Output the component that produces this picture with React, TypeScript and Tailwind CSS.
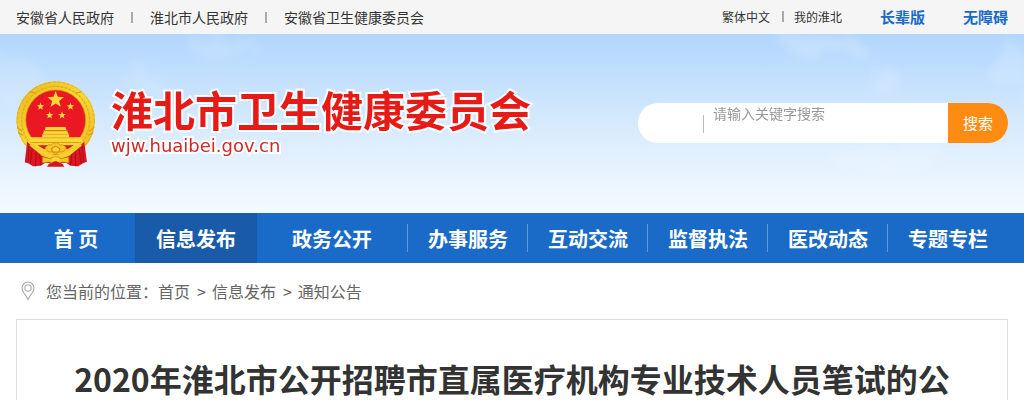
import { clsx } from "clsx";

const siteLinks = ["安徽省人民政府", "淮北市人民政府", "安徽省卫生健康委员会"];

const navItems = [
  { label: "首 页" },
  { label: "信息发布", active: true },
  { label: "政务公开" },
  { label: "办事服务", divider: true },
  { label: "互动交流", divider: true },
  { label: "监督执法", divider: true },
  { label: "医改动态", divider: true },
  { label: "专题专栏", divider: true },
];

const crumbs = ["首页", "信息发布", "通知公告"];

function starPoints(cx: number, cy: number, r: number) {
  return Array.from({ length: 10 }, (_, i) => {
    const radius = i % 2 === 0 ? r : r * 0.42;
    const angle = (Math.PI / 5) * i - Math.PI / 2;
    return `${(cx + radius * Math.cos(angle)).toFixed(1)},${(cy + radius * Math.sin(angle)).toFixed(1)}`;
  }).join(" ");
}

function Emblem() {
  return (
    <svg viewBox="20 12 238 256" className="h-[86px] w-20 shrink-0" aria-hidden="true">
      <defs>
        <linearGradient id="gold" x1="0" y1="0" x2="1" y2="1">
          <stop offset="0" stopColor="#e9b51c" />
          <stop offset="0.5" stopColor="#f9d936" />
          <stop offset="1" stopColor="#eeb41c" />
        </linearGradient>
      </defs>
      <ellipse cx="138" cy="130" rx="117" ry="117" fill="url(#gold)" />
      <ellipse cx="138" cy="130" rx="115" ry="115" fill="none" stroke="#dba01a" strokeWidth="2" strokeDasharray="10 4" />
      <ellipse cx="138" cy="130" rx="101" ry="102" fill="none" stroke="#e3ae1c" strokeWidth="4" strokeDasharray="9 3" />
      <circle cx="138" cy="128" r="89" fill="#ea1822" stroke="#d18a14" strokeWidth="2" />
      <path d="M24 150l14 12M26 166l16 8M252 150l-14 12M250 166l-16 8M60 44l18 4M216 44l-18 4" stroke="#d39a16" strokeWidth="3" />
      {/* drapery */}
      <path d="M53 192l22 22 44 16h38l44-16 22-22 8 60-15 6-10 8-24-2-12-8h-64l-12 8-24 2-10-8-14-4z" fill="#dd1622" />
      <path d="M58 204l-2 50M68 214l-6 46M80 220l-2 46M218 204l2 50M208 214l6 46M196 220l2 46M90 226l4 36M186 226l-4 36" stroke="#a50e19" strokeWidth="3" fill="none" />
      <g fill="#fbd83a">
        <polygon points={starPoints(138, 68, 26)} />
        <polygon points={starPoints(93, 88, 12)} />
        <polygon points={starPoints(182, 88, 12)} />
        <polygon points={starPoints(120, 114, 12)} />
        <polygon points={starPoints(157, 114, 12)} />
        {/* gate tower */}
        <path d="M108 149h60l2 9h-64zM104 160h68l5 11h-78zM98 171h80v8h35l8 15-22 14H77l-22-14 8-15h35z" />
      </g>
      <path d="M101 160h74M97 171h82M67 181h142" stroke="#d39a16" strokeWidth="2" />
      <path d="M62 195h152" stroke="#dd9e17" strokeWidth="3" />
      <path d="M84 203h36l-16 12zM192 203h-36l16 12z" fill="#dd1622" />
      {/* cogwheel and knots */}
      <path d="M66 194l32 25q40 24 80 0l32-25 6 10-38 31q-40 18-80 0l-38-31z" fill="#f9cf2e" />
      <path d="M106 211l10-9h10l5-6h14l5 6h10l10 9-10 12h-12l-10 6-10-6h-12z" fill="#f6c627" stroke="#c6860f" strokeWidth="2" />
      <path d="M125 214l13-8 13 8-5 9h-16z" fill="#fbd83a" stroke="#d9801a" strokeWidth="3" />
      <path d="M99 238l22 5 10-5h14l10 5 22-5v17l-22-2-9 9h-16l-9-9-22 2z" fill="#f6c627" stroke="#bd7a10" strokeWidth="2" />
      <path d="M118 258l20-8 20 8 6 9h-52z" fill="#d5141f" />
      <path d="M130 240h16l4 10h-24z" fill="#fbd83a" />
    </svg>
  );
}

function PinIcon() {
  return (
    <svg viewBox="0 0 14 20" className="h-5 w-[14px]" fill="none" stroke="#aaa" strokeWidth="1.1" aria-hidden="true">
      <path d="M7 18.500C5.500 15 1 11 1 7a6 6 0 0 1 12 0c0 4-4.500 8-6 11.500z" />
      <circle cx="7" cy="7" r="3.200" />
    </svg>
  );
}

function TopBar() {
  return (
    <div className="flex h-[34px] items-center justify-between bg-[#f5f5f5] px-4 text-[#333]">
      <ul className="flex items-center text-sm">
        {siteLinks.map((name, i) => (
          <li key={name} className="flex items-center">
            {i > 0 && <span className="mx-[17px] h-[11px] w-0.5 bg-[#aaa]" />}
            <a href="#">{name}</a>
          </li>
        ))}
      </ul>
      <div className="flex items-center text-xs">
        <a href="#">繁体中文</a>
        <span className="mr-[10px] ml-3 h-[11px] w-0.5 bg-[#aaa]" />
        <a href="#">我的淮北</a>
        <a href="#" className="ml-[38px] text-[15px] font-bold text-[#1a6bc7]">长辈版</a>
        <a href="#" className="ml-[38px] text-[15px] font-bold text-[#1a6bc7]">无障碍</a>
      </div>
    </div>
  );
}

function Clouds() {
  return (
    <svg viewBox="0 0 1024 179" preserveAspectRatio="none" className="absolute inset-0 h-full w-full" aria-hidden="true">
      <defs>
        <filter id="soft" x="-50%" y="-50%" width="200%" height="200%">
          <feTurbulence type="fractalNoise" baseFrequency="0.04" numOctaves="3" seed="4" result="noise" />
          <feDisplacementMap in="SourceGraphic" in2="noise" scale="40" />
          <feGaussianBlur stdDeviation="5" />
        </filter>
      </defs>
      <g fill="#fff" filter="url(#soft)">
        <ellipse cx="12" cy="45" rx="26" ry="28" opacity="0.12" />
        <ellipse cx="220" cy="10" rx="36" ry="9" opacity="0.16" />
        <ellipse cx="140" cy="46" rx="18" ry="12" opacity="0.12" />
        <ellipse cx="820" cy="10" rx="42" ry="10" opacity="0.2" />
        <ellipse cx="885" cy="46" rx="16" ry="14" opacity="0.15" />
        <ellipse cx="1010" cy="34" rx="24" ry="20" opacity="0.15" />
        <ellipse cx="890" cy="125" rx="60" ry="14" opacity="0.15" />
      </g>
    </svg>
  );
}

function Header() {
  return (
    <header className="relative flex h-[179px] items-center justify-between bg-linear-to-b from-[#b1d6fe] via-[#d6eafd] to-[#f5fbff] px-4 pb-px">
      <Clouds />
      <a href="#" className="relative flex items-start gap-[15px] pt-0.5">
        <Emblem />
        <div className="pt-[3px] text-[#e61a17] [paint-order:stroke_fill] [-webkit-text-stroke:4px_white]">
          <div className="text-[42px] leading-[50px] font-bold">淮北市卫生健康委员会</div>
          <div className="mt-0.5 font-['DejaVu_Sans'] text-lg leading-5 text-[#cf2a27]">wjw.huaibei.gov.cn</div>
        </div>
      </a>
      <form className="relative flex h-10 w-[370px] overflow-hidden rounded-full bg-white" onSubmit={(e) => e.preventDefault()}>
        <div className="mt-3 h-[18px] w-[66px] border-r border-[#bbb]" />
        <input
          type="text"
          aria-label="请输入关键字搜索"
          placeholder="请输入关键字搜索"
          className="h-5 min-w-0 flex-1 px-[9px] text-sm outline-none placeholder:text-[#999]"
        />
        <button type="submit" className="w-[60px] bg-[#ff8c12] text-[15px] text-white">搜索</button>
      </form>
    </header>
  );
}

function Nav() {
  return (
    <nav className="bg-[#1a6bc7] px-4">
      <ul className="grid grid-cols-[15fr_15fr_19fr_15fr_15fr_15fr_15fr_15fr] text-xl font-bold text-white">
        {navItems.map((item) => (
          <li key={item.label} className={clsx("flex h-[50px] items-center", item.active && "-mx-px bg-[#195ba8]")}>
            <a
              href="#"
              className={clsx("flex h-7 flex-1 items-center justify-center pt-0.5", item.divider && "-ml-px border-l border-[#5e98d8]")}
            >
              {item.label}
            </a>
          </li>
        ))}
      </ul>
    </nav>
  );
}

function Breadcrumb() {
  return (
    <div className="flex h-14 items-center px-[21px] text-base text-[#666]">
      <PinIcon />
      <span className="ml-[11px]">您当前的位置：</span>
      {crumbs.map((name, i) => (
        <span key={name} className="flex">
          {i > 0 && <span className="mr-[6px] ml-[7px]">&gt;</span>}
          <a href="#">{name}</a>
        </span>
      ))}
    </div>
  );
}

export default function App() {
  return (
    <div lang="zh-CN" className="bg-white font-['Noto_Sans_CJK_SC',sans-serif]">
      <TopBar />
      <Header />
      <Nav />
      <Breadcrumb />
      <main className="mx-4 border border-b-0 border-[#dcdcdc] pt-9">
        <h1 className="text-center text-[32px] leading-[44px] font-bold text-[#333]">
          2020年淮北市公开招聘市直属医疗机构专业技术人员笔试的公
        </h1>
      </main>
    </div>
  );
}
